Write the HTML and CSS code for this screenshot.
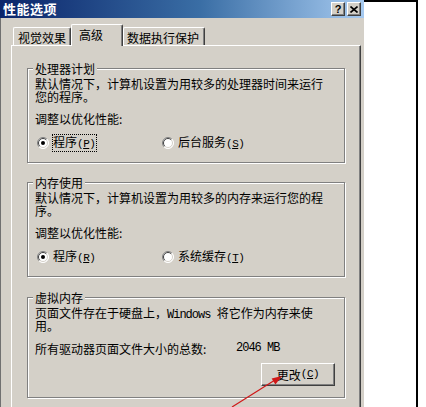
FILE: index.html
```html
<!DOCTYPE html>
<html lang="zh-CN">
<head>
<meta charset="utf-8">
<title>性能选项</title>
<link rel="stylesheet" href="styles.css">
</head>
<body>
<div class="page">
  <div class="dialog">
    <div class="titlebar">
      <span class="title">性能选项</span>
      <div class="cbtns">
        <span class="cbtn help">?</span>
        <span class="cbtn"><svg width="8" height="7" viewBox="0 0 8 7"><path d="M0.5 0.5L7.5 6.5M7.5 0.5L0.5 6.5" stroke="#000" stroke-width="1.6" fill="none"/></svg></span>
      </div>
    </div>
    <div class="body">
      <div class="tabs">
        <div class="tab t1">视觉效果</div>
        <div class="tab active">高级</div>
        <div class="tab t3">数据执行保护</div>
      </div>
      <div class="panel">
        <div class="group g1">
          <div class="legend">处理器计划</div>
          <div class="desc">
            <div class="line">默认情况下，计算机设置为用较多的处理器时间来运行</div>
            <div class="line">您的程序。</div>
          </div>
          <p class="adjust">调整以优化性能:</p>
          <div class="radios">
            <div class="radio first">
              <svg class="rb" width="12" height="12" viewBox="0 0 12 12"><circle cx="6" cy="6" r="5.5" fill="#fff"/><path d="M2.1 9.9A5.5 5.5 0 0 1 9.9 2.1" stroke="#808080" fill="none"/><path d="M9.9 2.1A5.5 5.5 0 0 1 2.1 9.9" stroke="#fff" fill="none"/><path d="M2.8 9.2A4.5 4.5 0 0 1 9.2 2.8" stroke="#404040" fill="none"/><path d="M9.2 2.8A4.5 4.5 0 0 1 2.8 9.2" stroke="#d4d0c8" fill="none"/><circle cx="6" cy="6" r="2" fill="#000"/></svg>
              <span class="lbl focus">程序<span class="acc">(<u>P</u>)</span></span>
            </div>
            <div class="radio">
              <svg class="rb" width="12" height="12" viewBox="0 0 12 12"><circle cx="6" cy="6" r="5.5" fill="#fff"/><path d="M2.1 9.9A5.5 5.5 0 0 1 9.9 2.1" stroke="#808080" fill="none"/><path d="M9.9 2.1A5.5 5.5 0 0 1 2.1 9.9" stroke="#fff" fill="none"/><path d="M2.8 9.2A4.5 4.5 0 0 1 9.2 2.8" stroke="#404040" fill="none"/><path d="M9.2 2.8A4.5 4.5 0 0 1 2.8 9.2" stroke="#d4d0c8" fill="none"/></svg>
              <span class="lbl">后台服务<span class="acc">(<u>S</u>)</span></span>
            </div>
          </div>
        </div>
        <div class="group g2">
          <div class="legend">内存使用</div>
          <div class="desc">
            <div class="line">默认情况下，计算机设置为用较多的内存来运行您的程</div>
            <div class="line">序。</div>
          </div>
          <p class="adjust">调整以优化性能:</p>
          <div class="radios">
            <div class="radio first">
              <svg class="rb" width="12" height="12" viewBox="0 0 12 12"><circle cx="6" cy="6" r="5.5" fill="#fff"/><path d="M2.1 9.9A5.5 5.5 0 0 1 9.9 2.1" stroke="#808080" fill="none"/><path d="M9.9 2.1A5.5 5.5 0 0 1 2.1 9.9" stroke="#fff" fill="none"/><path d="M2.8 9.2A4.5 4.5 0 0 1 9.2 2.8" stroke="#404040" fill="none"/><path d="M9.2 2.8A4.5 4.5 0 0 1 2.8 9.2" stroke="#d4d0c8" fill="none"/><circle cx="6" cy="6" r="2" fill="#000"/></svg>
              <span class="lbl">程序<span class="acc">(<u>R</u>)</span></span>
            </div>
            <div class="radio">
              <svg class="rb" width="12" height="12" viewBox="0 0 12 12"><circle cx="6" cy="6" r="5.5" fill="#fff"/><path d="M2.1 9.9A5.5 5.5 0 0 1 9.9 2.1" stroke="#808080" fill="none"/><path d="M9.9 2.1A5.5 5.5 0 0 1 2.1 9.9" stroke="#fff" fill="none"/><path d="M2.8 9.2A4.5 4.5 0 0 1 9.2 2.8" stroke="#404040" fill="none"/><path d="M9.2 2.8A4.5 4.5 0 0 1 2.8 9.2" stroke="#d4d0c8" fill="none"/></svg>
              <span class="lbl">系统缓存<span class="acc">(<u>T</u>)</span></span>
            </div>
          </div>
        </div>
        <div class="group g3">
          <div class="legend">虚拟内存</div>
          <div class="desc">
            <div class="line">页面文件存在于硬盘上，<span class="latin">Windows </span>将它作为内存来使</div>
            <div class="line">用。</div>
          </div>
          <div class="total">
            <span class="total-label">所有驱动器页面文件大小的总数:</span>
            <span class="latin">2046 MB</span>
          </div>
          <div class="btnrow">
            <div class="btn">更改<span class="acc">(<u>C</u>)</span></div>
          </div>
        </div>
      </div>
    </div>
  </div>
  <div class="side"></div>
  <svg class="arrow" width="426" height="407" viewBox="0 0 426 407">
    <line x1="232" y1="407" x2="275" y2="380" stroke="#d01818" stroke-width="1.2"/>
    <polygon points="282,376 271.6,378.4 275.4,384.4" fill="#d01818"/>
  </svg>
</div>
</body>
</html>
```

FILE: styles.css
```css
* {
  box-sizing: border-box;
}

html,
body {
  margin: 0;
  padding: 0;
}

body {
  width: 426px;
  height: 407px;
  overflow: hidden;
  background: #fff;
  color: #000;
  font-family: "Noto Sans CJK SC", sans-serif;
  font-size: 12px;
}

.page {
  position: relative;
  display: flex;
  height: 407px;
}

.dialog {
  width: 364px;
  height: 407px;
  background: #d4d0c8;
  display: flex;
  flex-direction: column;
}

.titlebar {
  height: 18px;
  flex: none;
  display: flex;
  align-items: center;
  padding: 0 3px 0 3px;
  background: linear-gradient(to right, #0a246a, #3a6ea5 55%, #a6caf0);
}

.title {
  flex: 1;
  color: #fff;
  font-weight: bold;
  font-size: 13px;
  line-height: 18px;
  letter-spacing: 0.5px;
}

.cbtns {
  display: flex;
  gap: 2px;
}

.cbtn {
  width: 14px;
  height: 14px;
  display: flex;
  align-items: center;
  justify-content: center;
  background: #d4d0c8;
  border: 1px solid;
  border-color: #fff #404040 #404040 #fff;
  box-shadow: inset -1px -1px 0 #808080;
}

.help {
  font-family: "Liberation Sans", sans-serif;
  font-weight: bold;
  font-size: 11px;
  line-height: 12px;
}

.body {
  flex: 1;
  display: flex;
  flex-direction: column;
  padding: 6px 0 0 10px;
  border-left: 1px solid #707070;
}

.tabs {
  position: relative;
  z-index: 1;
  display: flex;
  align-items: flex-end;
  height: 21px;
  padding-left: 2px;
}

.tab {
  height: 18px;
  padding: 3px 0 0 4px;
  line-height: 13px;
  white-space: nowrap;
  background: #d4d0c8;
  border-top: 1px solid #fff;
  border-left: 1px solid #fff;
  border-right: 1px solid #404040;
  box-shadow: inset -1px 0 0 #808080;
  border-radius: 2px 2px 0 0;
}

.tab.t1 {
  width: 58px;
}

.tab.active {
  width: 52px;
  height: 22px;
  margin-bottom: -1px;
  padding-left: 7px;
}

.tab.t3 {
  width: 82px;
  padding-left: 3px;
}

.panel {
  flex: 1;
  width: 350px;
  padding: 0 15px;
  border-top: 1px solid #fff;
  border-left: 1px solid #fff;
  border-right: 1px solid #404040;
  box-shadow: inset -1px 0 0 #808080;
}

.group {
  border: 1px solid #808080;
  box-shadow: inset 1px 1px 0 #fff, 1px 1px 0 #fff;
  padding: 0 7px 12px 7px;
  white-space: nowrap;
}

.g1 {
  margin-top: 22px;
}

.g2 {
  margin-top: 19px;
}

.g3 {
  margin-top: 20px;
  padding-bottom: 11px;
}

.legend {
  width: fit-content;
  margin: -7px 0 0 -2px;
  padding: 0 2px;
  background: #d4d0c8;
  line-height: 13px;
}

p {
  margin: 0;
}

.desc {
  margin-top: 3px;
}

.line {
  height: 13px;
  line-height: 13px;
  font-family: "Liberation Sans", "Noto Sans CJK SC", sans-serif;
  padding-top: 1px;
}

.adjust {
  margin-top: 8px;
  line-height: 13px;
}

.radios {
  display: flex;
  align-items: center;
  height: 15px;
  margin-top: 10px;
  padding-left: 2px;
}

.radio {
  display: flex;
  align-items: center;
  gap: 3px;
}

.radio.first {
  width: 125px;
}

.rb {
  flex: none;
}

.lbl {
  line-height: 13px;
  padding: 0 1px 0 0;
  border: 1px solid transparent;
}

.lbl.focus {
  border: 1px dotted #000;
}

.acc {
  font-family: "Liberation Mono", monospace;
  font-size: 11px;
  letter-spacing: -0.5px;
}

.latin {
  font-family: "Liberation Mono", monospace;
  font-size: 12px;
  letter-spacing: -1px;
}

.total {
  display: flex;
  margin-top: 9px;
  line-height: 13px;
}

.total-label {
  width: 201px;
}

.btnrow {
  display: flex;
  justify-content: flex-end;
  margin-top: 8px;
  padding-right: 2px;
}

.btn {
  width: 74px;
  height: 23px;
  display: flex;
  align-items: center;
  justify-content: center;
  line-height: 13px;
  border: 1px solid;
  border-color: #fff #404040 #404040 #fff;
  box-shadow: inset -1px -1px 0 #808080;
}

.side {
  width: 54px;
  height: 407px;
  background: #fff;
  border-top: 2px solid #000;
  border-right: 2px solid #000;
}

.arrow {
  position: absolute;
  left: 0;
  top: 0;
  pointer-events: none;
}
```
